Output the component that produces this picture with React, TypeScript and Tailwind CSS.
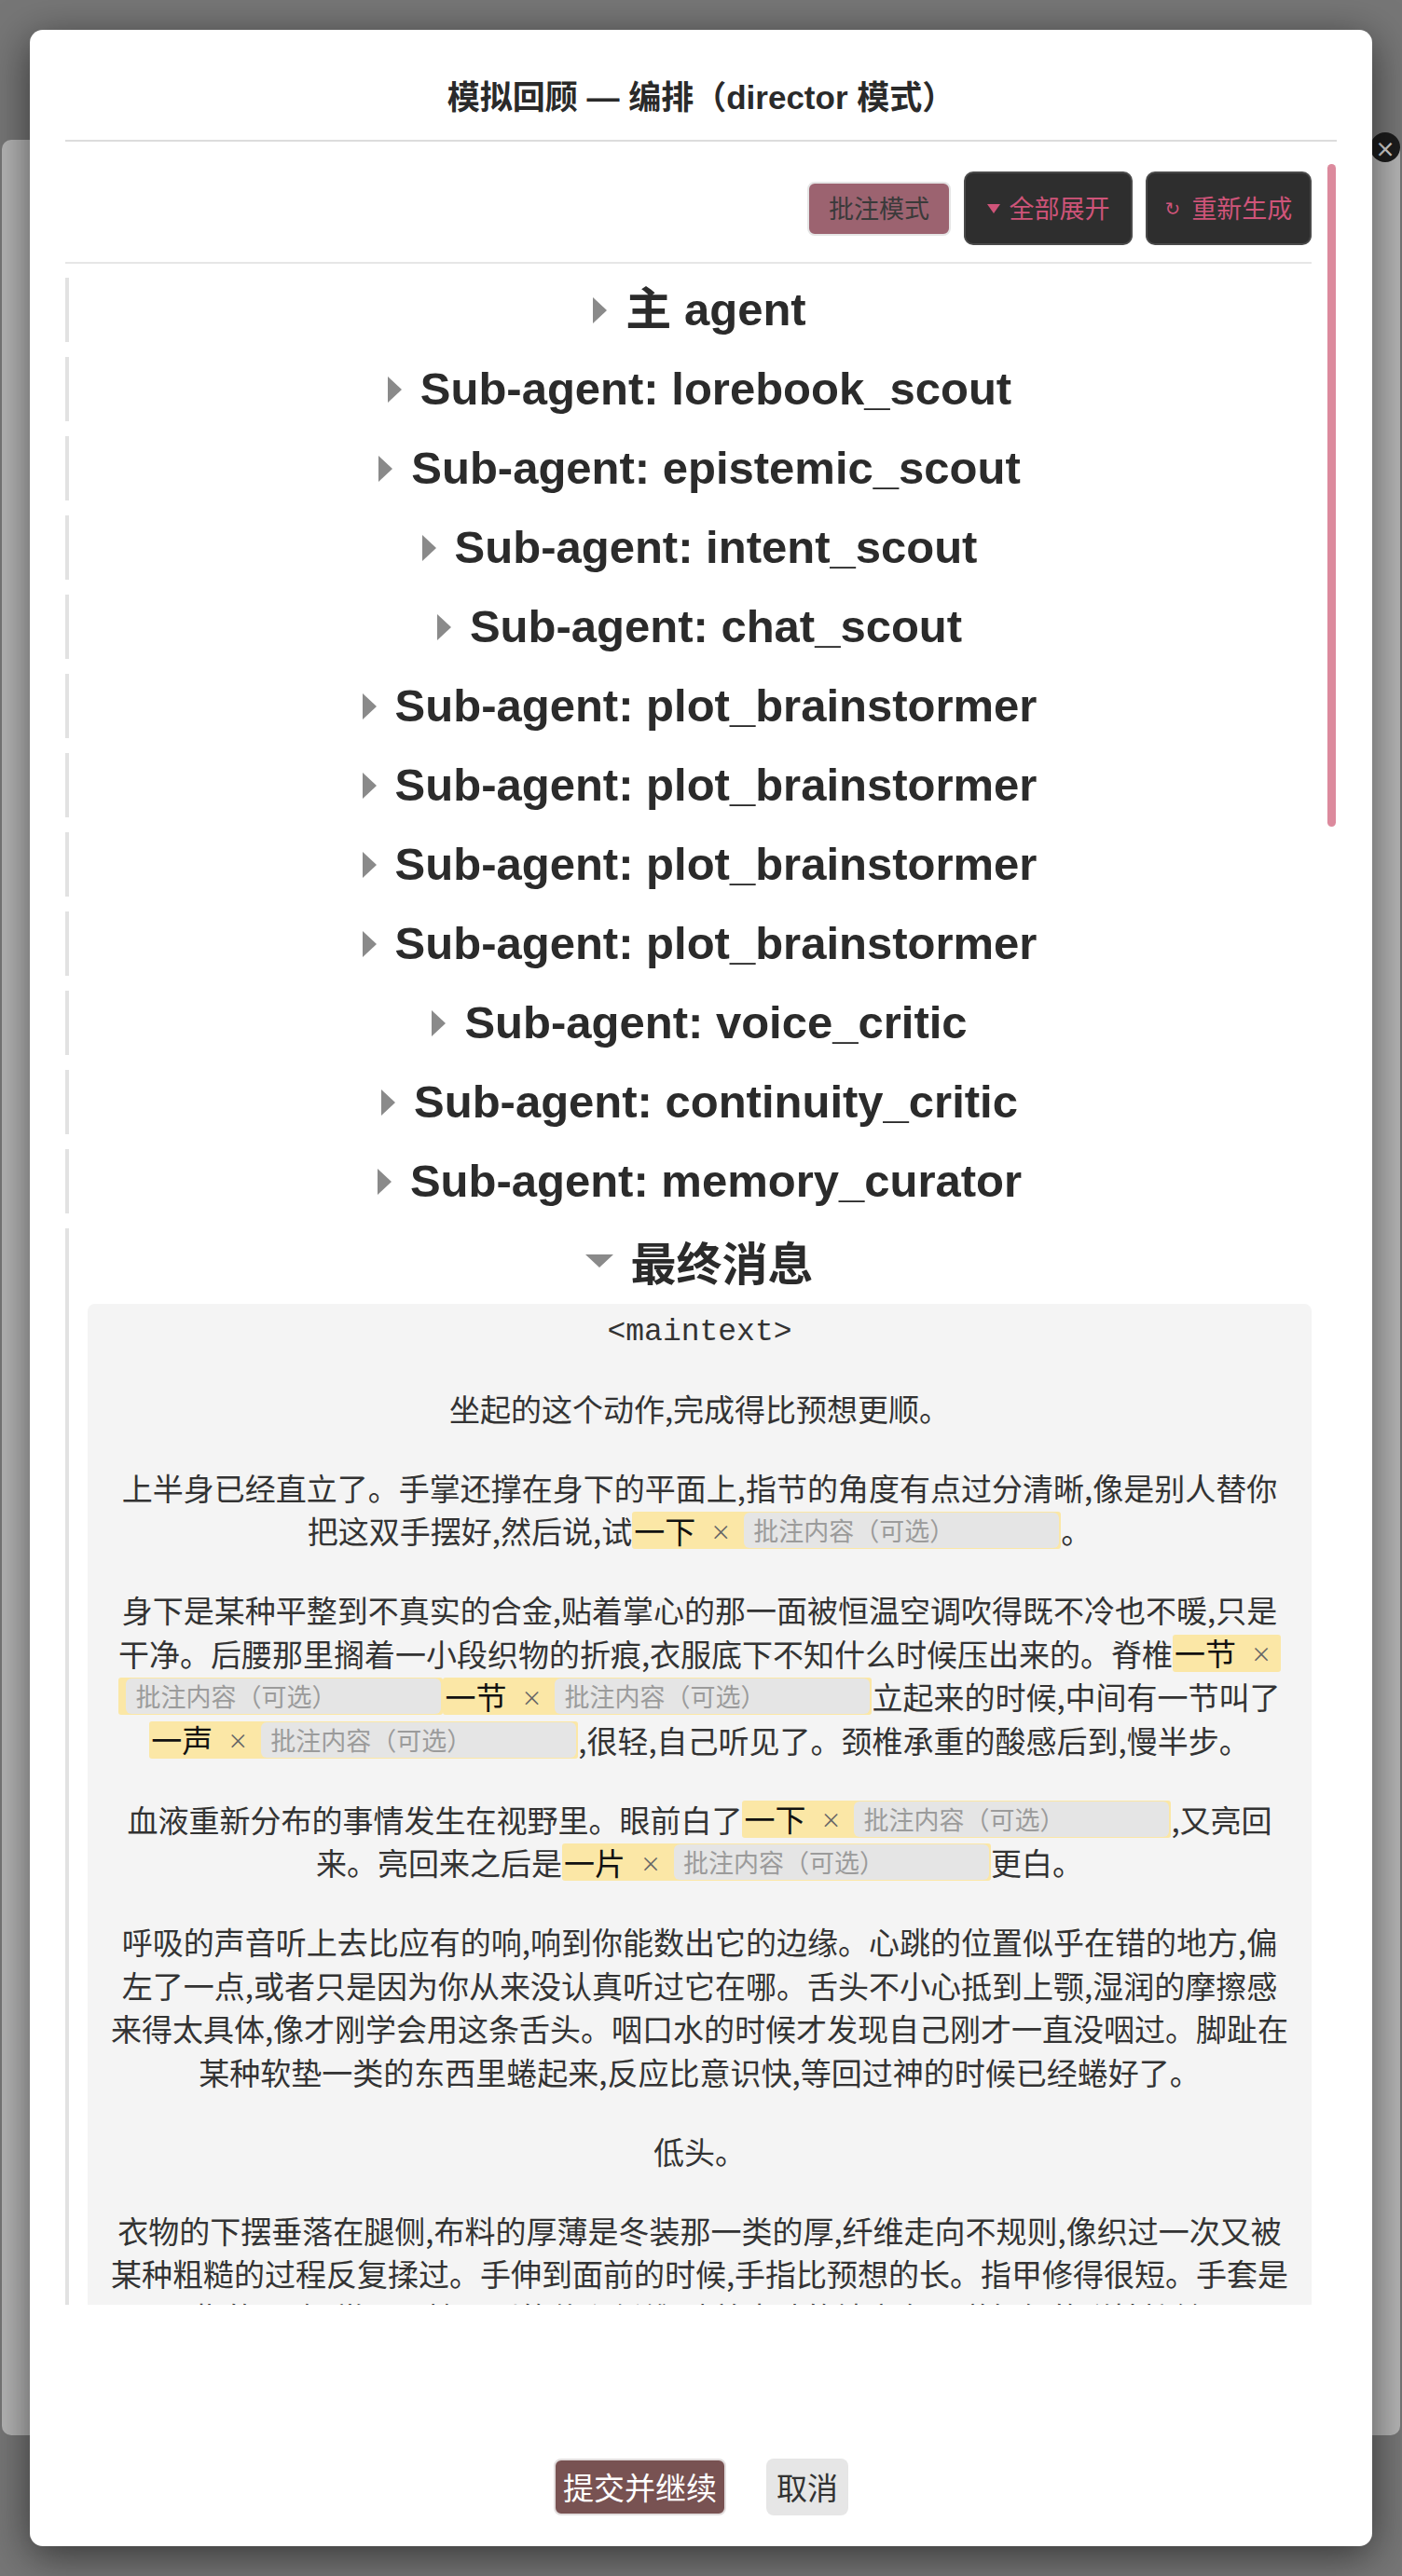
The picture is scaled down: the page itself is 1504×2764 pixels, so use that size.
import { Key } from 'react'

const agents = [
    '主 agent',
    'Sub-agent: lorebook_scout',
    'Sub-agent: epistemic_scout',
    'Sub-agent: intent_scout',
    'Sub-agent: chat_scout',
    'Sub-agent: plot_brainstormer',
    'Sub-agent: plot_brainstormer',
    'Sub-agent: plot_brainstormer',
    'Sub-agent: plot_brainstormer',
    'Sub-agent: voice_critic',
    'Sub-agent: continuity_critic',
    'Sub-agent: memory_curator',
]

function Caret({ open }: { open?: boolean }) {
    if (open) {
        return (
            <svg width="30" height="14" viewBox="0 0 30 14" className="shrink-0">
                <path d="M0 0 L30 0 L15 14 Z" fill="#8a8a8a" />
            </svg>
        );
    }
    return (
        <svg width="15" height="28" viewBox="0 0 15 28" className="shrink-0">
            <path d="M0 0 L15 14 L0 28 Z" fill="#8a8a8a" />
        </svg>
    );
}

function Note() {
    return (
        <input
            placeholder="批注内容（可选）"
            className="w-[338px] h-[38px] rounded-[6px] bg-[#e5e5e5] px-[10px] text-[27px] leading-[38px] text-[#333] placeholder:text-[#9b9b9b] outline-none"
        />
    );
}

function Mark({ text }: { text: string }) {
    return (
        <span className="inline-flex items-center align-top h-[40px] my-[3px] px-[2px] bg-[#fbe7a6] rounded-[3px]">
            <span className="text-[#111]">{text}</span>
            <span className="ml-[16px] mr-[14px] text-[22px] text-[#666]">×</span>
            <Note />
        </span>
    );
}

function AgentRow({ title }: { title: string }) {
    return (
        <div className="border-l-4 border-[#e2e2e2] pl-[20px] mb-[16px]">
            <div className="flex justify-center items-center gap-[20px] h-[69px]">
                <Caret />
                <span className="text-[49px] leading-[69px] font-bold text-[#2b2b2b] font-['Liberation_Sans','Noto_Sans_CJK_SC',sans-serif]">
                    {title}
                </span>
            </div>
        </div>
    );
}

function FinalMessage() {
    return (
        <div className="border-l-4 border-[#e2e2e2] pl-[20px]">
            <div className="flex justify-center items-center gap-[18px] h-[69px]">
                <Caret open />
                <span className="text-[49px] leading-[69px] font-bold text-[#2b2b2b]">最终消息</span>
            </div>
            <div className="mt-[12px] bg-[#f4f4f4] rounded-[8px] px-[16px] pt-[8px] pb-[40px] text-center text-[33px] leading-[46.5px] text-[#333]">
                <p className="mb-[34px] font-['Liberation_Mono',monospace]">&lt;maintext&gt;</p>
                <p className="mb-[38.5px]">坐起的这个动作,完成得比预想更顺。</p>
                <p className="mb-[38.5px]">
                    上半身已经直立了。手掌还撑在身下的平面上,指节的角度有点过分清晰,像是别人替你<br />
                    把这双手摆好,然后说,试<Mark text="一下" />。
                </p>
                <p className="mb-[38.5px]">
                    身下是某种平整到不真实的合金,贴着掌心的那一面被恒温空调吹得既不冷也不暖,只是<br />
                    干净。后腰那里搁着一小段织物的折痕,衣服底下不知什么时候压出来的。脊椎
                    <span className="inline-flex items-center align-top h-[40px] my-[3px] px-[2px] bg-[#fbe7a6] rounded-[3px]">
                        <span className="text-[#111]">一节</span>
                        <span className="ml-[16px] mr-[8px] text-[22px] text-[#666]">×</span>
                    </span>
                    <br />
                    <span className="inline-flex items-center align-top h-[40px] my-[3px] pl-[8px] pr-[2px] bg-[#fbe7a6] rounded-[3px]">
                        <Note />
                    </span>
                    <Mark text="一节" />立起来的时候,中间有一节叫了<br />
                    <Mark text="一声" />,很轻,自己听见了。颈椎承重的酸感后到,慢半步。
                </p>
                <p className="mb-[38.5px]">
                    血液重新分布的事情发生在视野里。眼前白了<Mark text="一下" />,又亮回<br />
                    来。亮回来之后是<Mark text="一片" />更白。
                </p>
                <p className="mb-[38.5px]">
                    呼吸的声音听上去比应有的响,响到你能数出它的边缘。心跳的位置似乎在错的地方,偏<br />
                    左了一点,或者只是因为你从来没认真听过它在哪。舌头不小心抵到上颚,湿润的摩擦感<br />
                    来得太具体,像才刚学会用这条舌头。咽口水的时候才发现自己刚才一直没咽过。脚趾在<br />
                    某种软垫一类的东西里蜷起来,反应比意识快,等回过神的时候已经蜷好了。
                </p>
                <p className="mb-[38.5px]">低头。</p>
                <p className="mb-[38.5px]">
                    衣物的下摆垂落在腿侧,布料的厚薄是冬装那一类的厚,纤维走向不规则,像织过一次又被<br />
                    某种粗糙的过程反复揉过。手伸到面前的时候,手指比预想的长。指甲修得很短。手套是<br />
                    露指的,黑色,掌面用捻了别的什么纤维,贴着皮肤的地方有一道很细的弹性接缝。
                </p>
            </div>
        </div>
    );
}

function Toolbar() {
    return (
        <div className="flex justify-end items-center gap-[14px] pt-[16px] pb-[18px] border-b-2 border-[#e6e6e6]">
            <button className="h-[58px] px-[21px] rounded-[8px] border-2 border-[#e5e5e5] bg-[#9c6370] text-[27px] text-[#3a3a3a]">
                批注模式
            </button>
            <button className="h-[79px] w-[181px] flex items-center justify-center gap-[10px] rounded-[10px] border-2 border-[#4a4a4a] bg-[#2e2e2e] text-[27px] text-[#cf5479]">
                <svg width="14" height="10" viewBox="0 0 14 10">
                    <path d="M0 0 L14 0 L7 10 Z" fill="#cf5479" />
                </svg>
                全部展开
            </button>
            <button className="h-[79px] w-[178px] flex items-center justify-center gap-[12px] rounded-[10px] border-2 border-[#4a4a4a] bg-[#2e2e2e] text-[27px] text-[#cf5479]">
                <span className="text-[20px] font-['DejaVu_Sans',sans-serif]">↻</span>
                重新生成
            </button>
        </div>
    );
}

export default function App() {
    return (
        <div className="relative w-[1504px] h-[2764px] overflow-hidden bg-[#767676] font-['Noto_Sans_CJK_SC',sans-serif]">
            {/* page behind the dialog */}
            <div className="relative mt-[150px] mx-[2px] h-[2463px] rounded-[10px] bg-[#b4b4b4]">
                <div className="absolute right-[0px] top-[-8px] w-[32px] h-[32px] rounded-full bg-[#1c1c1c] flex items-center justify-center text-[#d0d0d0] text-[22px] font-bold leading-none">
                    ×
                </div>
            </div>

            <div className="absolute left-[32px] top-[32px] w-[1440px] h-[2700px] bg-white rounded-[14px] shadow-[0_10px_45px_rgba(0,0,0,0.55)] px-[38px] flex flex-col">
                <div className="pt-[50px] pb-[22px] border-b-2 border-[#dcdcdc] text-center text-[35px] leading-[46px] font-bold text-[#2a2a2a] font-['Liberation_Sans','Noto_Sans_CJK_SC',sans-serif]">
                    模拟回顾 — 编排（director 模式）
                </div>

                <div className="relative mt-[16px] h-[2305px] overflow-hidden pr-[27px]">
                    <Toolbar />
                    <div className="mt-[15px]">
                        {agents.map((title, key: Key) => (
                            <AgentRow title={title} key={key} />
                        ))}
                        <FinalMessage />
                    </div>
                    <div className="absolute right-[1px] top-[8px] w-[9px] h-[711px] rounded-full bg-[#dc8a9d]" />
                </div>

                <div className="mt-[165px] flex justify-center gap-[43px]">
                    <button className="h-[61px] px-[8px] rounded-[8px] border-2 border-[#e2dede] bg-[#785252] text-[33px] text-white">
                        提交并继续
                    </button>
                    <button className="h-[61px] px-[11px] rounded-[8px] bg-[#e6e6e6] text-[33px] text-[#333]">
                        取消
                    </button>
                </div>
            </div>
        </div>
    );
}
